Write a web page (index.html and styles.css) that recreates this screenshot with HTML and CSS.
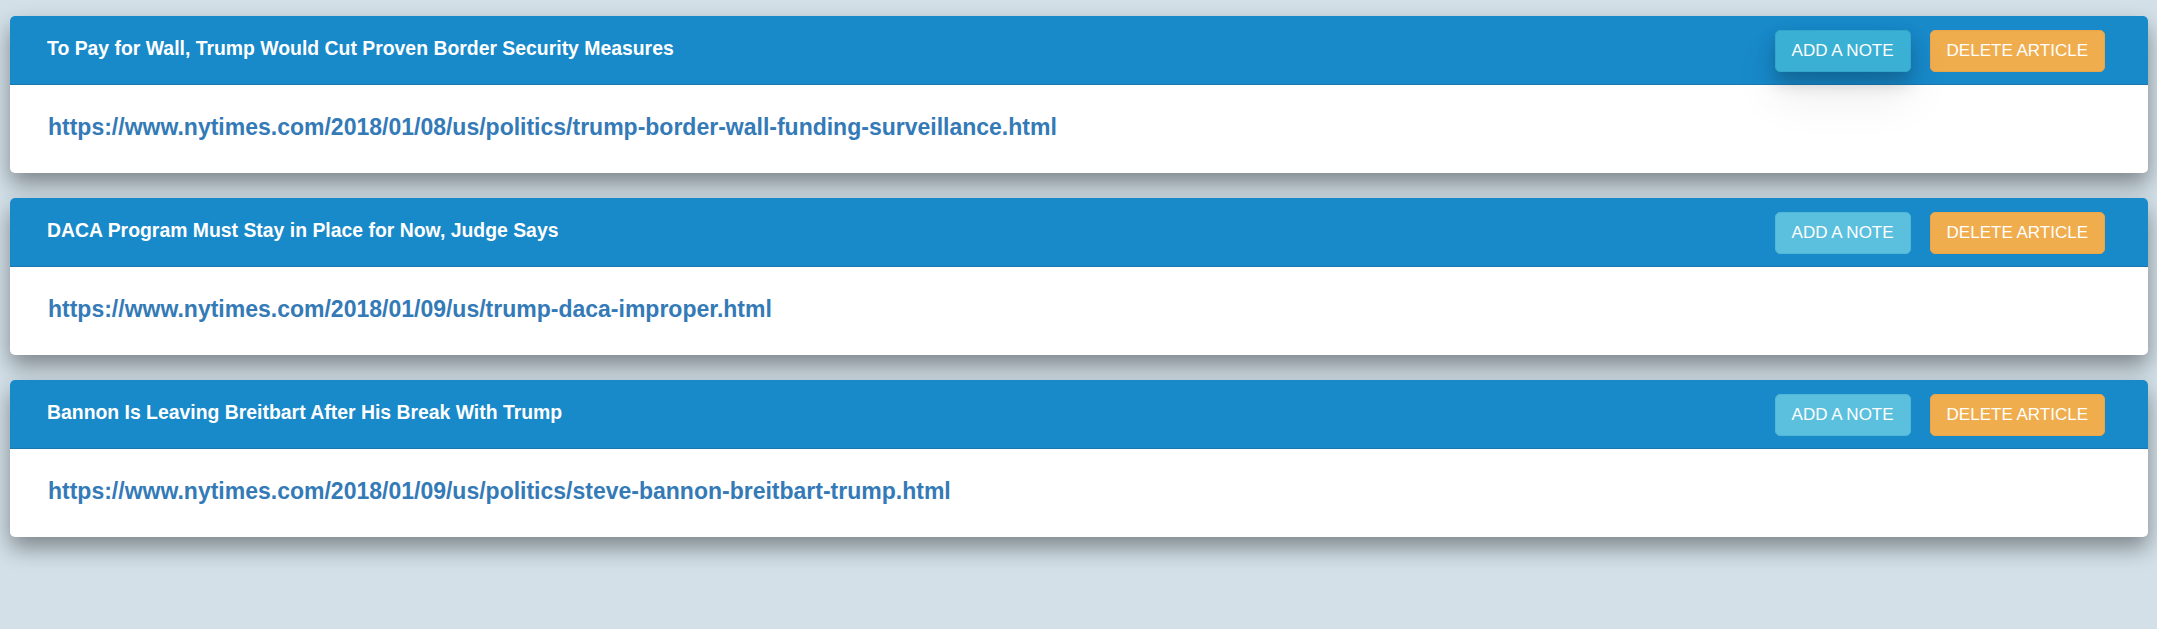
FILE: index.html
```html
<!DOCTYPE html>
<html lang="en">
<head>
<meta charset="utf-8">
<title>Saved Articles</title>
<link rel="stylesheet" href="styles.css">
</head>
<body>
<main class="articles">
  <section class="card">
    <header class="card-head">
      <h3 class="card-title">To Pay for Wall, Trump Would Cut Proven Border Security Measures</h3>
      <div class="actions">
        <button class="btn btn-note is-active">ADD A NOTE</button>
        <button class="btn btn-delete">DELETE ARTICLE</button>
      </div>
    </header>
    <div class="card-body">
      <a class="card-link" href="#">https://www.nytimes.com/2018/01/08/us/politics/trump-border-wall-funding-surveillance.html</a>
    </div>
  </section>
  <section class="card">
    <header class="card-head">
      <h3 class="card-title">DACA Program Must Stay in Place for Now, Judge Says</h3>
      <div class="actions">
        <button class="btn btn-note">ADD A NOTE</button>
        <button class="btn btn-delete">DELETE ARTICLE</button>
      </div>
    </header>
    <div class="card-body">
      <a class="card-link" href="#">https://www.nytimes.com/2018/01/09/us/trump-daca-improper.html</a>
    </div>
  </section>
  <section class="card">
    <header class="card-head">
      <h3 class="card-title">Bannon Is Leaving Breitbart After His Break With Trump</h3>
      <div class="actions">
        <button class="btn btn-note">ADD A NOTE</button>
        <button class="btn btn-delete">DELETE ARTICLE</button>
      </div>
    </header>
    <div class="card-body">
      <a class="card-link" href="#">https://www.nytimes.com/2018/01/09/us/politics/steve-bannon-breitbart-trump.html</a>
    </div>
  </section>
</main>
</body>
</html>
```

FILE: styles.css
```css
html, body {
  margin: 0;
  padding: 0;
}
body {
  background: #d3e0e8;
  font-family: "Liberation Sans", Arial, Helvetica, sans-serif;
  min-height: 629px;
}
.articles {
  display: flex;
  flex-direction: column;
  gap: 25px;
  padding: 16px 9px 0 10px;
}
.card {
  background: #ffffff;
  border-radius: 5px;
  box-shadow: 0 11px 22px rgba(0, 0, 0, 0.4);
}
.card-head {
  height: 69px;
  box-sizing: border-box;
  display: flex;
  align-items: center;
  justify-content: space-between;
  padding: 0 43px 0 37px;
  background: #1889c9;
  border-bottom: 1px solid #1b78b0;
  border-radius: 5px 5px 0 0;
}
.card-title {
  margin: 0 0 3px 0;
  color: #ffffff;
  font-size: 19.4px;
  font-weight: bold;
  line-height: 1.2;
}
.actions {
  display: flex;
  gap: 19px;
  margin-top: 1px;
}
.btn {
  height: 42px;
  padding: 0 16px;
  border: 1px solid transparent;
  border-radius: 5px;
  color: #ffffff;
  font-family: "Liberation Sans", Arial, Helvetica, sans-serif;
  font-size: 17px;
  line-height: 1;
  cursor: pointer;
}
.btn-note {
  background: #5bc0de;
  border-color: #52b6d5;
}
.btn-note.is-active {
  position: relative;
  z-index: 1;
  background: #3ab0d4;
  border-color: #34a6ca;
  box-shadow: 0 10px 18px rgba(0, 0, 0, 0.22), 0 24px 48px rgba(0, 0, 0, 0.08);
}
.btn-delete {
  background: #f0ad4e;
  border-color: #eba448;
}
.card-body {
  height: 88px;
  box-sizing: border-box;
  display: flex;
  align-items: center;
  padding: 0 38px 3px 38px;
}
.card-link {
  color: #337ab7;
  font-size: 23px;
  font-weight: bold;
  line-height: 1.2;
  text-decoration: none;
}
```
